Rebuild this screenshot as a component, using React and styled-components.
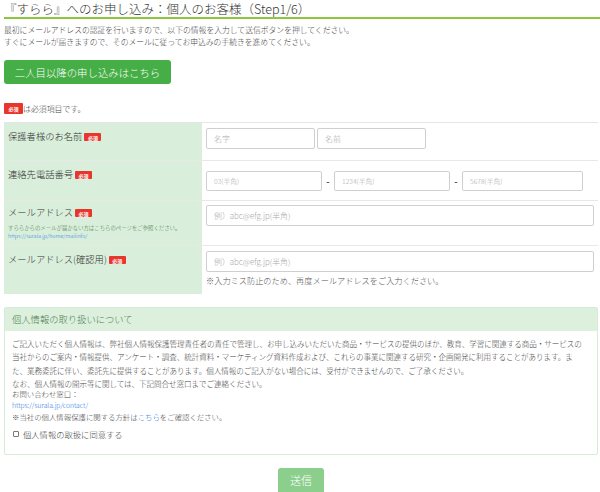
import React from 'react';
import styled, { createGlobalStyle } from 'styled-components';

const GlobalStyle = createGlobalStyle`
  html, body {
    margin: 0;
    padding: 0;
    background: #fff;
  }
  body {
    font-family: "Noto Sans CJK JP", "Noto Sans", sans-serif;
    font-weight: 300;
    color: #333;
  }
`;

const App = () => {
  return (
    <Page>
      <GlobalStyle />
      <Title>『すらら』へのお申し込み：個人のお客様（Step1/6）</Title>
      <Lead>
        最初にメールアドレスの認証を行いますので、以下の情報を入力して送信ボタンを押してください。
        <br />
        すぐにメールが届きますので、そのメールに従ってお申込みの手続きを進めてください。
      </Lead>
      <SecondButton type="button">二人目以降の申し込みはこちら</SecondButton>

      <RequiredNote>
        <Badge big>必須</Badge>は必須項目です。
      </RequiredNote>

      <FormTable>
        <Row h={37}>
          <LabelCell>
            保護者様のお名前<Badge>必須</Badge>
          </LabelCell>
          <FieldCell top={5}>
            <NameFields>
              <Input placeholder="名字" />
              <Input placeholder="名前" />
            </NameFields>
          </FieldCell>
        </Row>

        <Row h={40}>
          <LabelCell>
            連絡先電話番号<Badge>必須</Badge>
          </LabelCell>
          <FieldCell top={10}>
            <PhoneFields>
              <Input small placeholder="03(半角)" />
              <Dash>-</Dash>
              <Input small placeholder="1234(半角)" />
              <Dash>-</Dash>
              <Input small placeholder="5678(半角)" />
            </PhoneFields>
          </FieldCell>
        </Row>

        <Row h={45}>
          <LabelCell top={5}>
            メールアドレス<Badge>必須</Badge>
            <SubNote>
              すららからのメールが届かない方はこちらのページをご参照ください。
              <br />
              <SubLink href="#">https://surala.jp/home/mailinfo/</SubLink>
            </SubNote>
          </LabelCell>
          <FieldCell top={4}>
            <Input wide placeholder="例）abc@efg.jp(半角)" />
          </FieldCell>
        </Row>

        <Row h={49}>
          <LabelCell>
            メールアドレス(確認用)<Badge>必須</Badge>
          </LabelCell>
          <FieldCell top={5}>
            <Input wide placeholder="例）abc@efg.jp(半角)" />
            <FieldNote>※入力ミス防止のため、再度メールアドレスをご入力ください。</FieldNote>
          </FieldCell>
        </Row>
      </FormTable>

      <PrivacyBox>
        <PrivacyHeader>個人情報の取り扱いについて</PrivacyHeader>
        <PrivacyBody>
          <Policy>
            ご記入いただく個人情報は、弊社個人情報保護管理責任者の責任で管理し、お申し込みいただいた商品・サービスの提供のほか、教育、学習に関連する商品・サービスの
            <br />
            当社からのご案内・情報提供、アンケート・調査、統計資料・マーケティング資料作成および、これらの事業に関連する研究・企画開発に利用することがあります。ま
            <br />
            た、業務委託に伴い、委託先に提供することがあります。個人情報のご記入がない場合には、受付ができませんので、ご了承ください。
            <br />
            なお、個人情報の開示等に関しては、下記問合せ窓口までご連絡ください。
          </Policy>
          <Contact>
            お問い合わせ窓口：
            <br />
            <ContactLink href="#">https://surala.jp/contact/</ContactLink>
            <br />
            ※当社の個人情報保護に関する方針は<InlineLink href="#">こちら</InlineLink>をご確認ください。
          </Contact>
          <Agree>
            <CheckBox type="checkbox" />
            個人情報の取扱に同意する
          </Agree>
        </PrivacyBody>
      </PrivacyBox>

      <SubmitRow>
        <SubmitButton type="button">送信</SubmitButton>
      </SubmitRow>
    </Page>
  );
};

export default App;

const Page = styled.div`
  width: 600px;
  box-sizing: border-box;
  padding: 0 2px 0 4px;
`;

const Title = styled.h1`
  margin: 0 -2px 0 0;
  padding: 0;
  line-height: 17px;
  font-size: 12.5px;
  font-weight: 300;
  color: #333;
  white-space: nowrap;
  border-bottom: 2px solid #8dc63f;
`;

const Lead = styled.p`
  margin: 5px 0 0;
  font-size: 7.8px;
  line-height: 12px;
  color: #444;
  white-space: nowrap;
`;

const SecondButton = styled.button`
  display: block;
  margin-top: 12px;
  width: 167px;
  height: 24px;
  padding: 0;
  border: none;
  border-radius: 3px;
  background: #46ae46;
  color: #fff;
  font-family: inherit;
  font-weight: 300;
  font-size: 10.4px;
`;

const RequiredNote = styled.div`
  margin-top: 18px;
  display: flex;
  align-items: center;
  height: 12px;
  font-size: 7.9px;
  color: #444;
`;

const Badge = styled.span`
  display: inline-flex;
  align-items: center;
  justify-content: center;
  width: ${p => (p.big ? '19px' : '17px')};
  height: ${p => (p.big ? '11px' : '8px')};
  margin-left: ${p => (p.big ? '0' : '2px')};
  border-radius: 1px;
  background: #e8362c;
  color: #fff;
  font-size: 5px;
  font-weight: bold;
  line-height: 1;
  vertical-align: middle;
`;

const FormTable = styled.div`
  margin-top: 8px;
  border-top: 1px solid #e6e6e6;
`;

const Row = styled.div`
  display: grid;
  grid-template-columns: 198px 1fr;
  height: ${p => p.h}px;
  box-sizing: border-box;
  & + & {
    border-top: 1px solid #e8e8e8;
  }
`;

const LabelCell = styled.div`
  background: #d9efdb;
  padding: ${p => p.top ?? 7}px 4px 0;
  font-size: 9.3px;
  line-height: 12px;
  color: #333;
  white-space: nowrap;
`;

const SubNote = styled.div`
  margin-top: 6px;
  font-size: 5.4px;
  line-height: 8px;
  color: #3f6f3f;
`;

const SubLink = styled.a`
  color: #2a7ae2;
  text-decoration: none;
`;

const FieldCell = styled.div`
  padding: ${p => p.top}px 4px 0;
`;

const NameFields = styled.div`
  display: grid;
  grid-template-columns: 109px 109px;
  gap: 2px;
`;

const PhoneFields = styled.div`
  display: grid;
  grid-template-columns: 116px 12px 116px 12px 121px;
  align-items: center;
  width: 377px;
`;

const Dash = styled.span`
  text-align: center;
  font-size: 9px;
  color: #555;
  font-weight: bold;
`;

const Input = styled.input`
  box-sizing: border-box;
  display: block;
  width: ${p => (p.wide ? '388px' : '100%')};
  height: ${p => (p.small ? '20px' : '21px')};
  margin: 0;
  padding: 0 7px;
  border: 1px solid #cfcfcf;
  border-radius: 2px;
  background: #fff;
  font-family: inherit;
  font-weight: 300;
  font-size: ${p => (p.small ? '6.8px' : '7.9px')};
  color: #333;
  outline: none;
  &::placeholder {
    color: #a8a8a8;
  }
`;

const FieldNote = styled.div`
  margin-top: 2px;
  font-size: 8.2px;
  line-height: 12px;
  color: #555;
  white-space: nowrap;
`;

const PrivacyBox = styled.section`
  margin-top: 13px;
  border: 1px solid #d5ecd6;
  border-radius: 2px;
`;

const PrivacyHeader = styled.div`
  height: 23px;
  line-height: 23px;
  padding-left: 7px;
  background: #dcf0dd;
  font-size: 9.3px;
  color: #4f7d4f;
`;

const PrivacyBody = styled.div`
  padding: 6px 7px 15px;
  color: #444;
`;

const Policy = styled.p`
  margin: 0;
  font-size: 7.5px;
  line-height: 13.3px;
  white-space: nowrap;
`;

const Contact = styled.p`
  margin: -2px 0 0;
  font-size: 7.4px;
  line-height: 11px;
  white-space: nowrap;
`;

const ContactLink = styled.a`
  color: #2a7ae2;
  font-size: 6.7px;
  text-decoration: none;
`;

const InlineLink = styled.a`
  color: #2a7ae2;
  text-decoration: none;
`;

const Agree = styled.label`
  display: flex;
  align-items: center;
  margin-top: 7px;
  height: 10px;
  font-size: 8.3px;
  color: #444;
`;

const CheckBox = styled.input`
  appearance: none;
  width: 6px;
  height: 6px;
  margin: 0 4px 0 1px;
  border: 1px solid #777;
  border-radius: 1px;
  background: #fff;
`;

const SubmitRow = styled.div`
  display: flex;
  justify-content: center;
  margin-top: 13px;
`;

const SubmitButton = styled.button`
  width: 46px;
  height: 28px;
  padding: 0 0 4px;
  border: none;
  border-radius: 3px;
  background: #8ccf8c;
  color: #fff;
  font-family: inherit;
  font-weight: 300;
  font-size: 11px;
`;
